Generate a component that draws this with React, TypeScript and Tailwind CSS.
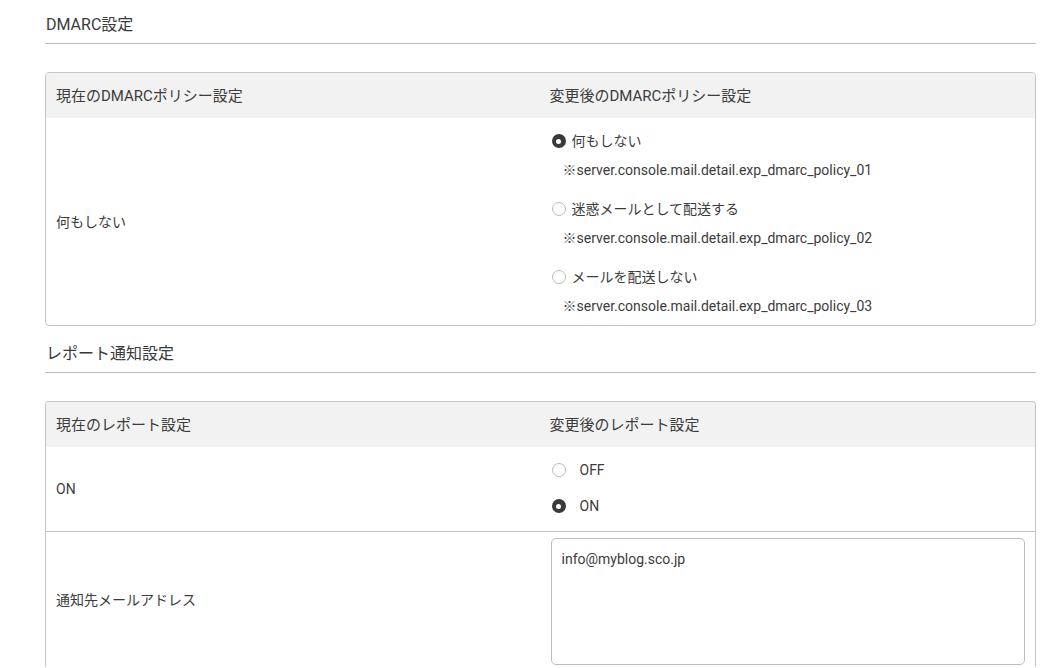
import React from "react";

const font = { fontFamily: 'Roboto, "Noto Sans CJK JP", sans-serif' };

function Radio({ checked }: { checked?: boolean }) {
  return checked ? (
    <span className="inline-flex h-[14px] w-[14px] shrink-0 items-center justify-center rounded-full bg-[#3a3a3a]">
      <span className="h-[5px] w-[5px] rounded-full bg-white" />
    </span>
  ) : (
    <span className="inline-block h-[14px] w-[14px] shrink-0 rounded-full border border-[#bcbcbc] bg-white" />
  );
}

function Heading({ children }: { children: React.ReactNode }) {
  return (
    <div className="border-b border-[#bdbdbd] pb-[8px] pl-px text-[16px] leading-[20px] text-[#3a3a3a]">
      {children}
    </div>
  );
}

export default function App() {
  const policies = [
    { label: "何もしない", note: "※server.console.mail.detail.exp_dmarc_policy_01", checked: true },
    { label: "迷惑メールとして配送する", note: "※server.console.mail.detail.exp_dmarc_policy_02" },
    { label: "メールを配送しない", note: "※server.console.mail.detail.exp_dmarc_policy_03" },
  ];
  return (
    <div className="min-h-[668px] w-[1054px] bg-white text-[#3c3c3c]" style={font}>
      <div className="pl-[45px] pr-[18px] pt-[15px]">
        <Heading>DMARC設定</Heading>
        <div className="mt-[28px] overflow-hidden rounded-[4px] border border-[#c4c4c4] text-[14px] leading-[20px]">
          <div className="grid grid-cols-2 bg-[#f2f2f2] text-[15px]">
            <div className="flex h-[45px] items-center pl-[10px]">現在のDMARCポリシー設定</div>
            <div className="flex h-[45px] items-center pl-[9px]">変更後のDMARCポリシー設定</div>
          </div>
          <div className="grid grid-cols-2">
            <div className="flex items-center pl-[10px]">何もしない</div>
            <div className="flex flex-col pb-[9px] pl-[11px] pt-[13px]">
              {policies.map((p, i) => (
                <div key={i} className={i > 0 ? "mt-[19px]" : ""}>
                  <div className="flex items-center gap-[6px]">
                    <Radio checked={p.checked} />
                    <span>{p.label}</span>
                  </div>
                  <div className="mt-[9px] pl-[11px]">{p.note}</div>
                </div>
              ))}
            </div>
          </div>
        </div>

        <div className="mt-[18px]">
          <Heading>レポート通知設定</Heading>
        </div>
        <div className="mt-[28px] overflow-hidden rounded-t-[4px] border border-b-0 border-[#c4c4c4] text-[14px] leading-[20px]">
          <div className="grid grid-cols-2 bg-[#f2f2f2] text-[15px]">
            <div className="flex h-[45px] items-center pl-[10px]">現在のレポート設定</div>
            <div className="flex h-[45px] items-center pl-[9px]">変更後のレポート設定</div>
          </div>
          <div className="grid grid-cols-2 border-b border-[#c4c4c4]">
            <div className="flex items-center pl-[10px]">ON</div>
            <div className="flex flex-col pb-[15px] pl-[11px] pt-[13px]">
              <div className="flex items-center gap-[14px]">
                <Radio />
                <span>OFF</span>
              </div>
              <div className="mt-[16px] flex items-center gap-[14px]">
                <Radio checked />
                <span>ON</span>
              </div>
            </div>
          </div>
          <div className="grid grid-cols-2">
            <div className="flex items-center pl-[10px]">通知先メールアドレス</div>
            <div className="px-[10px] pb-[2px] pt-[6px]">
              <div className="h-[127px] rounded-[5px] border border-[#bdbdbd] px-[10px] py-[10px]">
                info@myblog.sco.jp
              </div>
            </div>
          </div>
        </div>
      </div>
    </div>
  );
}
